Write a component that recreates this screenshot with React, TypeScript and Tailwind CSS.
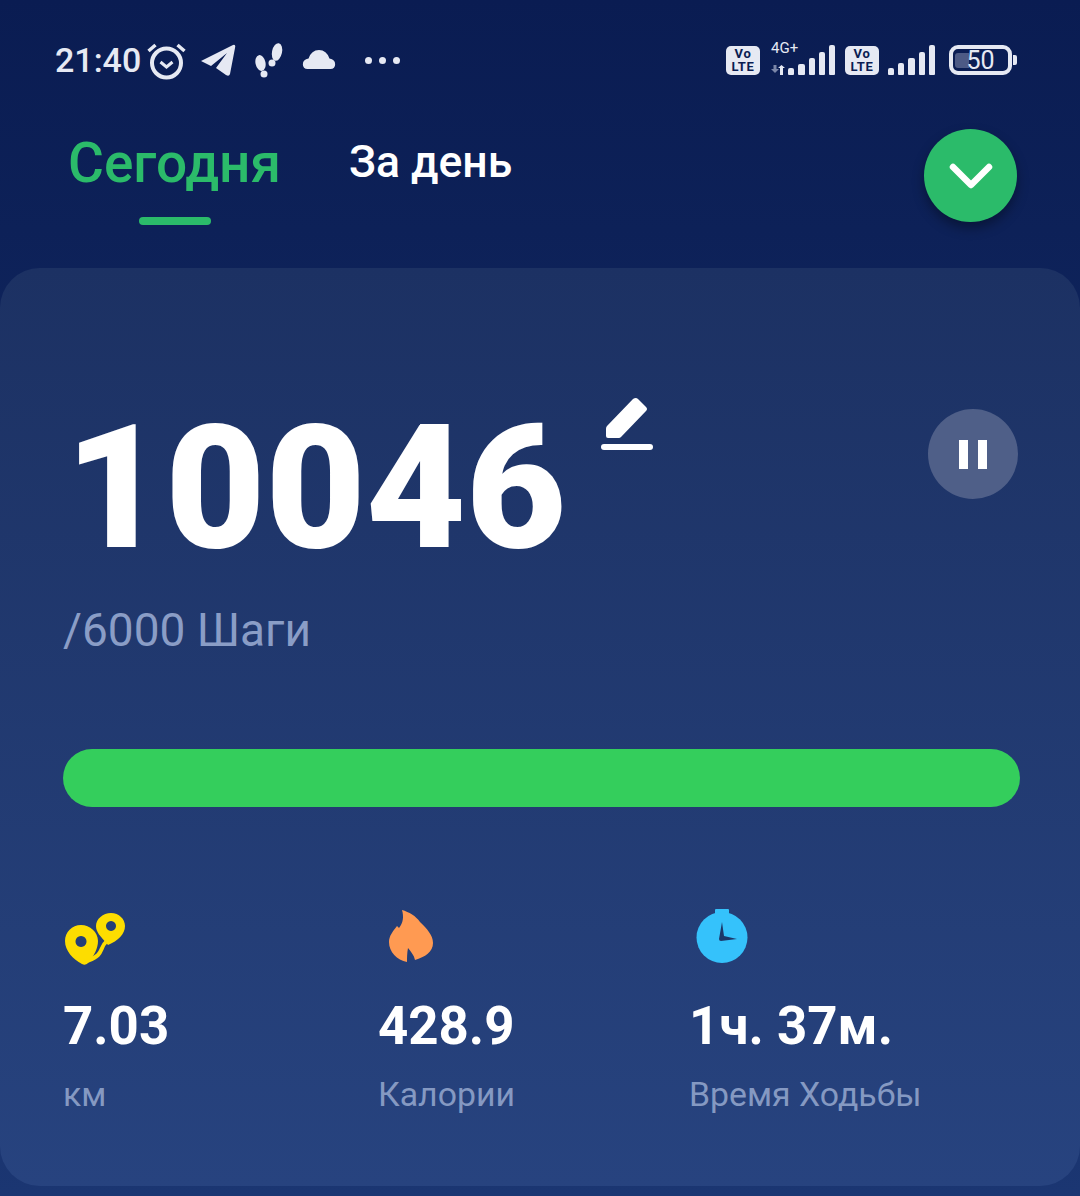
import React from "react";

const Bars = ({ heights }: { heights: number[] }) => (
  <div className="flex items-end gap-[4px] h-[30px]">
    {heights.map((h, i) => (
      <div key={i} className="w-[6.2px] bg-[#e6e9f3] rounded-t-[2px] rounded-b-[1px]" style={{ height: h }} />
    ))}
  </div>
);

const Volte = () => (
  <div className="w-[34px] h-[29px] rounded-[5px] bg-[#e6e9f3] flex flex-col items-center justify-center text-[#0a1c52] text-[13px] leading-[13.5px] font-bold tracking-[0.7px]">
    <span>Vo</span>
    <span>LTE</span>
  </div>
);

const Stat = ({ icon, value, label, cls }: { icon: React.ReactNode; value: string; label: string; cls: string }) => (
  <div className={cls}>
    <div className="h-[56px] flex items-start">{icon}</div>
    <div className="mt-[31px] text-white font-bold text-[52.8px] leading-[60px]">{value}</div>
    <div className="mt-[19px] text-[#8599c2] text-[33.8px] leading-[40px]">{label}</div>
  </div>
);

export default function App() {
  return (
    <div className="w-[1080px] h-[1196px] overflow-hidden bg-gradient-to-b from-[#0a1c52] to-[#1b3672] font-['Roboto',sans-serif]">
      <div className="h-[120px] flex items-center justify-between pl-[55px] pr-[63px]">
        <div className="flex items-center text-[#e6e9f3]">
          <span className="text-[34px] leading-none font-medium">21:40</span>
          <svg width="41" height="38" viewBox="0 0 40 38" className="ml-[5px] mt-[1px]" fill="none" stroke="#e6e9f3">
            <circle cx="20" cy="21" r="14.5" strokeWidth="4" />
            <path d="M14 20l6 5 6-5" strokeWidth="3" />
            <path d="M2 9l7-6M38 9l-7-6" strokeWidth="3.5" />
          </svg>
          <svg width="36" height="32" viewBox="0 0 36 32" className="ml-[13px]" fill="#e6e9f3">
            <path d="M1 17 L33 1 Q36 0 35 4 L30 30 Q29 33 26 31 L16 24 L27 9 L11 22 Z" />
          </svg>
          <svg width="32" height="38" viewBox="0 0 32 38" className="ml-[18px]" fill="#e6e9f3">
            <ellipse cx="6.5" cy="22" rx="5" ry="8" transform="rotate(-12 6.5 22)" />
            <ellipse cx="10" cy="33" rx="3.5" ry="3.5" />
            <ellipse cx="23" cy="11" rx="5" ry="9" transform="rotate(12 23 11)" />
            <ellipse cx="18" cy="22" rx="3.5" ry="3.5" />
          </svg>
          <svg width="34" height="19" viewBox="0 0 34 20" className="ml-[16px] mt-[-2px]" fill="#e6e9f3">
            <path d="M5 20 Q0 20 0 15 Q0 10 6 9 Q9 0 17 0 Q25 0 28 9 Q34 10 34 15 Q34 20 29 20 Z" />
          </svg>
          <div className="ml-[29px] flex gap-[7px]">
            <div className="w-[7px] h-[7px] rounded-full bg-[#e6e9f3]" />
            <div className="w-[7px] h-[7px] rounded-full bg-[#e6e9f3]" />
            <div className="w-[7px] h-[7px] rounded-full bg-[#e6e9f3]" />
          </div>
        </div>
        <div className="flex items-center">
          <Volte />
          <div className="relative ml-[11px] w-[64px] h-[30px] flex justify-end items-end">
            <span className="absolute left-0 top-[-4px] text-[15px] leading-none text-[#e6e9f3]">4G+</span>
            <svg width="14" height="10" viewBox="0 0 14 10" className="absolute left-[0px] bottom-0">
              <path d="M0 4h2.5V0h3v4H8L4 8z" fill="#7b86a8" />
              <path d="M9 10V3H7l3.5-3L14 3h-2v7z" fill="#e6e9f3" />
            </svg>
            <Bars heights={[7, 11, 17, 23, 30]} />
          </div>
          <div className="ml-[10px]"><Volte /></div>
          <div className="ml-[9px]"><Bars heights={[7, 12, 17, 23, 30]} /></div>
          <div className="ml-[14px] flex items-center">
            <div className="w-[63px] h-[30px] rounded-[9px] border-[4px] border-[#e6e9f3] pl-[2px] relative flex items-center">
              <div className="h-[15px] w-[14px] bg-[#4d5a85] rounded-l-[3px]" />
              <span className="absolute inset-0 flex items-center justify-center text-[25px] leading-none text-[#e6e9f3]">50</span>
            </div>
            <div className="ml-[1px] w-[4px] h-[10px] bg-[#e6e9f3] rounded-r-[2px]" />
          </div>
        </div>
      </div>

      <div className="h-[148px] flex items-start pl-[68px] pr-[63px]">
        <div className="flex flex-col items-center">
          <span className="text-[#2bbb6a] text-[55px] leading-[60px] font-medium mt-[13px]">Сегодня</span>
          <div className="mt-[24px] ml-[1px] w-[72px] h-[8px] rounded-full bg-[#2bbb6a]" />
        </div>
        <span className="ml-[68px] mt-[14px] text-white text-[44.5px] leading-[56px] font-medium">За день</span>
        <div className="ml-auto mt-[9px] w-[93px] h-[93px] rounded-full bg-[#2bbb6a] flex items-center justify-center shadow-[0_6px_12px_rgba(0,0,0,0.35)]">
          <svg width="44" height="28" viewBox="0 0 44 28" fill="none" stroke="#fff" strokeWidth="6.5" strokeLinecap="round" strokeLinejoin="round">
            <path d="M4 5l18 18L40 5" />
          </svg>
        </div>
      </div>

      <div className="h-[918px] rounded-[40px] bg-gradient-to-b from-[#1c3163] to-[#27437f] pl-[63px] pr-[60px] pt-[120px]">
        <div className="flex items-start justify-between">
          <div className="flex items-start">
            <span className="text-white font-black text-[173px] leading-[200px] ml-[2px]">10046</span>
            <svg width="54" height="54" viewBox="0 0 54 54" className="ml-[34px] mt-[9px]" fill="#fff">
              <path d="M7 29 L33 2 Q36 0 38 2 L46 10 Q48 12 46 14 L21 40 Q20 41 19 41 L8 41 Q6 41 6 39 L6 32 Q6 30 7 29 Z" />
              <rect x="1" y="47" width="52" height="6" rx="3" />
            </svg>
          </div>
          <div className="mt-[21px] mr-[2px] w-[90px] h-[90px] rounded-full bg-[#4f5f88] flex items-center justify-center gap-[9.5px]">
            <div className="w-[9.5px] h-[29px] bg-white" />
            <div className="w-[9.5px] h-[29px] bg-white" />
          </div>
        </div>
        <div className="mt-[14px] text-[#8a9dc6] text-[46px] leading-[56px]">/6000 Шаги</div>
        <div className="mt-[91px] h-[58px] rounded-full bg-[#34ce5c]" />
        <div className="mt-[102px] flex items-start">
          <Stat
            cls="w-[315px]"
            value="7.03"
            label="км"
            icon={
              <svg width="60" height="52" viewBox="0 0 60 52" className="ml-[2px] mt-[4px]" fill="#fddd00">
                <path fillRule="evenodd" d="M16 12 C25 12 33 19 33 28 C33 35 29 43 24 49 Q21 53 17 51 C8 46 0 38 0 28 C0 19 7 12 16 12 Z M16 23 a5.5 5.5 0 1 0 .01 0 Z" />
                <path fillRule="evenodd" d="M46 0 C54 0 60 6 60 13 C60 21 53 28 43 32 C35 23 31 19 31 13 C31 6 38 0 46 0 Z M46 8 a5 5 0 1 0 .01 0 Z" />
                <path d="M41 29 C37 32 37 38 33 42 C29 46 24 47 20 49" fill="none" stroke="#fddd00" strokeWidth="4" />
              </svg>
            }
          />
          <Stat
            cls="w-[311px]"
            value="428.9"
            label="Калории"
            icon={
              <svg width="44" height="52" viewBox="0 0 44 52" className="ml-[11px] mt-[1px]" fill="#ff9a52">
                <path d="M13 0 C20 2 27 6 31 12 C38 19 44 25 44 33 C44 42 36 47 26 50 C25 45 22 42 19 38 C18 43 18 48 18 52 C8 50 0 42 0 32 C0 26 4 21 8 16 L10 18 C14 13 15 7 13 0 Z" />
              </svg>
            }
          />
          <Stat
            cls=""
            value="1ч. 37м."
            label="Время Ходьбы"
            icon={
              <svg width="52" height="54" viewBox="0 0 52 54" className="ml-[7px]" fill="#35c2fb">
                <rect x="19" y="0" width="14" height="6" rx="1" />
                <circle cx="26" cy="28.5" r="25.5" />
                <path d="M26 13 L28 27 L41 30 L25 32 Q23 32 23 30 Z" fill="#1c3769" />
              </svg>
            }
          />
        </div>
      </div>
    </div>
  );
}
